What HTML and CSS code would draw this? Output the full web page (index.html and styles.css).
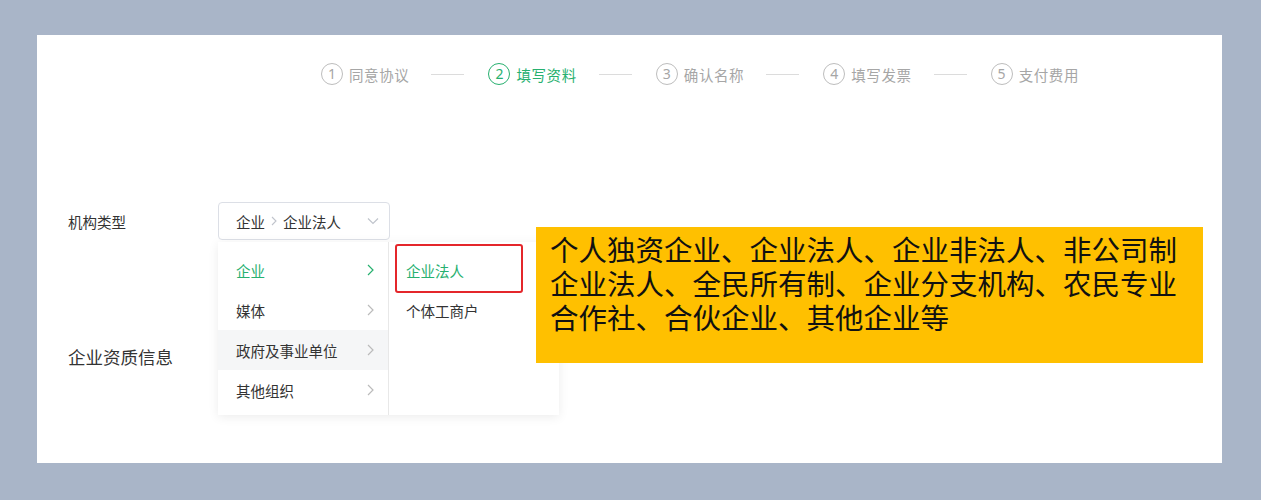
FILE: index.html
```html
<!DOCTYPE html>
<html lang="zh-CN">
<head>
<meta charset="utf-8">
<title>填写资料</title>
<link rel="stylesheet" href="styles.css">
</head>
<body>
<div class="panel">
  <div class="steps">
    <div class="step"><span class="num">1</span><span class="label">同意协议</span></div>
    <span class="line"></span>
    <div class="step active"><span class="num">2</span><span class="label">填写资料</span></div>
    <span class="line"></span>
    <div class="step"><span class="num">3</span><span class="label">确认名称</span></div>
    <span class="line"></span>
    <div class="step"><span class="num">4</span><span class="label">填写发票</span></div>
    <span class="line"></span>
    <div class="step"><span class="num">5</span><span class="label">支付费用</span></div>
  </div>

  <div class="form">
    <div class="row">
      <div class="field-label">机构类型</div>
      <div class="select-wrap">
        <div class="select">
          <span>企业</span>
          <svg class="sep" width="6" height="10" viewBox="0 0 6 10"><path d="M1 1 L5 5 L1 9" fill="none" stroke="#c0c4cc" stroke-width="1.1"/></svg>
          <span>企业法人</span>
          <svg class="caret" width="12" height="8" viewBox="0 0 12 8"><path d="M1 1.5 L6 6.5 L11 1.5" fill="none" stroke="#c0c4cc" stroke-width="1.2"/></svg>
        </div>
        <div class="menu">
          <ul class="col col-1">
            <li class="on"><span>企业</span><svg class="arr" width="7" height="12" viewBox="0 0 7 12"><path d="M1 1 L6 6 L1 11" fill="none" stroke="currentColor" stroke-width="1.2"/></svg></li>
            <li><span>媒体</span><svg class="arr" width="7" height="12" viewBox="0 0 7 12"><path d="M1 1 L6 6 L1 11" fill="none" stroke="currentColor" stroke-width="1.2"/></svg></li>
            <li class="hover"><span>政府及事业单位</span><svg class="arr" width="7" height="12" viewBox="0 0 7 12"><path d="M1 1 L6 6 L1 11" fill="none" stroke="currentColor" stroke-width="1.2"/></svg></li>
            <li><span>其他组织</span><svg class="arr" width="7" height="12" viewBox="0 0 7 12"><path d="M1 1 L6 6 L1 11" fill="none" stroke="currentColor" stroke-width="1.2"/></svg></li>
          </ul>
          <ul class="col col-2">
            <li class="on"><span>企业法人</span></li>
            <li><span>个体工商户</span></li>
          </ul>
          <div class="mark"></div>
        </div>
        <div class="note">个人独资企业、企业法人、企业非法人、非公司制企业法人、全民所有制、企业分支机构、农民专业合作社、合伙企业、其他企业等</div>
      </div>
    </div>
    <div class="row row-2">
      <div class="section-label">企业资质信息</div>
    </div>
  </div>
</div>
</body>
</html>
```

FILE: styles.css
```css
* { box-sizing: border-box; }
html, body { margin: 0; padding: 0; }
body {
  background: #a9b5c8;
  width: 1261px;
  height: 500px;
  overflow: hidden;
  font-family: "Noto Sans CJK SC", "Noto Sans", sans-serif;
}
.panel {
  margin: 35px 0 0 37px;
  width: 1185px;
  height: 428px;
  background: #fff;
  padding: 28px 0 0 31px;
}
.steps {
  display: flex;
  align-items: center;
  padding-left: 253px;
  height: 22px;
}
.step {
  display: flex;
  align-items: center;
  gap: 6px;
  color: #a6a6a6;
  font-size: 14.5px;
}
.step .num {
  width: 22px;
  height: 22px;
  border: 1px solid #bdbdbd;
  border-radius: 50%;
  display: flex;
  align-items: center;
  justify-content: center;
  font-size: 14px;
  font-family: "Noto Sans", sans-serif;
  line-height: 1;
}
.step .label { letter-spacing: 0.6px; }
.step.active { color: #27b06f; }
.step.active .num { border-color: #27b06f; }
.line {
  width: 33px;
  height: 1px;
  background: #dcdcdc;
  margin: 0 24px 0 22px;
}
.form { margin-top: 117px; }
.row {
  display: flex;
  align-items: center;
}
.field-label {
  width: 150px;
  font-size: 14.5px;
  color: #333;
}
.select-wrap { position: relative; }
.select {
  width: 172px;
  height: 38px;
  border: 1px solid #dcdfe6;
  border-radius: 4px;
  display: flex;
  align-items: center;
  padding-left: 17px;
  font-size: 14.5px;
  color: #333;
  gap: 6px;
}
.select .caret { margin-left: auto; margin-right: 10px; }
.menu {
  position: absolute;
  left: 0;
  top: 40px;
  display: flex;
  height: 173px;
  background: #fff;
  box-shadow: 0 2px 10px rgba(0, 0, 0, 0.08);
}
.col {
  list-style: none;
  margin: 0;
  padding: 8px 0 0;
  width: 171px;
}
.col-1 { border-right: 1px solid #e8e8e8; width: 171px; }
.col-2 { width: 170px; }
.col li {
  height: 40px;
  display: flex;
  align-items: center;
  padding: 0 14px 0 18px;
  font-size: 14.5px;
  color: #333;
}
.col-2 li { padding-left: 17px; }
.col li.on { color: #27b06f; }
.col li.hover { background: #f5f6f7; }
.arr {
  margin-left: auto;
  color: #bbb;
}
.col li.on .arr { color: #27b06f; }
.mark {
  position: absolute;
  left: 177px;
  top: 2px;
  width: 128px;
  height: 49px;
  border: 2px solid #e4262b;
  border-radius: 3px;
}
.note {
  position: absolute;
  left: 318px;
  top: 25px;
  width: 667px;
  height: 136px;
  background: #ffc000;
  padding: 5px 20px 0 14px;
  font-size: 28.5px;
  line-height: 34px;
  color: #111;
}
.row-2 { margin-top: 104px; }
.section-label {
  font-size: 17.5px;
  color: #333;
}
```
